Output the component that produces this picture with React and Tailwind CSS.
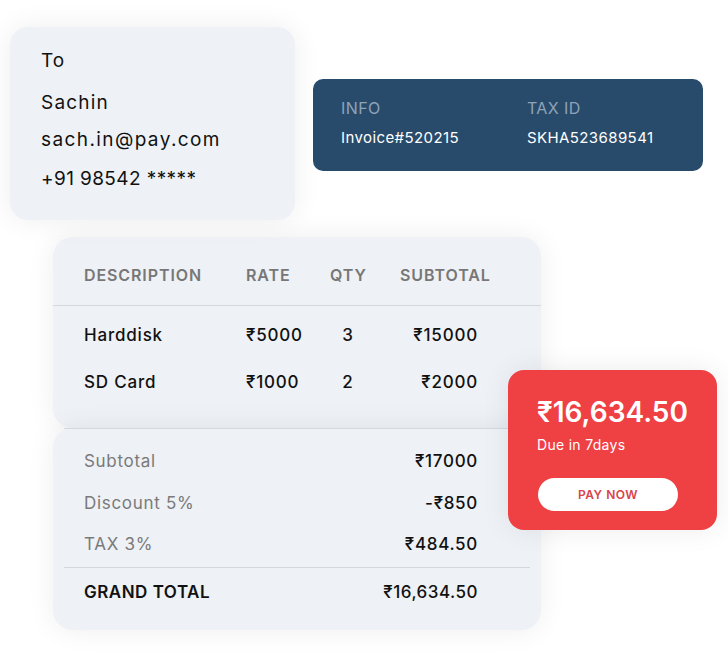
import React from "react";

const items = [
  { name: "Harddisk", rate: "₹5000", qty: 3, total: "₹15000" },
  { name: "SD Card", rate: "₹1000", qty: 2, total: "₹2000" },
];

const summary = [
  { label: "Subtotal", value: "₹17000" },
  { label: "Discount 5%", value: "-₹850" },
  { label: "TAX 3%", value: "₹484.50" },
];

const cardShadow = "shadow-[0_0_28px_rgba(15,23,42,0.07)]";

export default function App() {
  return (
    <div
      className="relative w-[728px] h-[659px] bg-white overflow-hidden text-[#111]"
      style={{ fontFamily: "Inter, 'Noto Sans', sans-serif" }}
    >
      {/* top row */}
      <div className="flex items-start pt-[27px] pl-[10px]">
        <div className={`w-[285px] h-[193px] rounded-[18px] bg-[#eef1f5] pl-[31px] pt-[21px] text-[19px] leading-[26px] tracking-[0.9px] ${cardShadow}`}>
          <div>To</div>
          <div className="mt-[16px] tracking-[1.2px]">Sachin</div>
          <div className="mt-[11px] tracking-[1.4px]">sach.in@pay.com</div>
          <div className="mt-[13px] tracking-[0.4px]">+91 98542 *****</div>
        </div>

        <div className="ml-[18px] mt-[52px] w-[390px] h-[92px] rounded-[10px] bg-[#284b6b] pl-[28px] pt-[17px] grid grid-cols-[186px_1fr] tracking-[0.4px]">
          <div>
            <div className="text-[16px] leading-[24px] text-[#8ea3b8]">INFO</div>
            <div className="text-[15px] leading-[20px] text-white mt-[8px]">Invoice#520215</div>
          </div>
          <div>
            <div className="text-[16px] leading-[24px] text-[#8ea3b8]">TAX ID</div>
            <div className="text-[15px] leading-[20px] text-white mt-[8px]">SKHA523689541</div>
          </div>
        </div>
      </div>

      {/* invoice table */}
      <div className="ml-[53px] mt-[17px] w-[488px]">
        <div className={`h-[191px] rounded-[20px] bg-[#eef1f5] ${cardShadow}`}>
          <div className="h-[69px] border-b border-[#d4d8dd] pl-[31px] pt-[7px] grid grid-cols-[162px_84px_70px_78px] items-center text-[16px] font-semibold text-[#777] tracking-[0.9px]">
            <div>DESCRIPTION</div>
            <div>RATE</div>
            <div className="w-[36px] text-center">QTY</div>
            <div className="whitespace-nowrap">SUBTOTAL</div>
          </div>
          <div className="pl-[31px] pt-[6px]">
            {items.map((it) => (
              <div key={it.name} className="h-[47px] grid grid-cols-[162px_84px_70px_78px] items-center text-[17px] font-medium tracking-[0.8px]">
                <div>{it.name}</div>
                <div>{it.rate}</div>
                <div className="w-[36px] text-center">{it.qty}</div>
                <div className="text-right">{it.total}</div>
              </div>
            ))}
          </div>
        </div>

        <div className={`h-[202px] rounded-[20px] bg-[#eef1f5] ${cardShadow}`}>
          <div className="mx-[11px] border-t border-[#d4d8dd]" />
          <div className="pl-[31px] w-[425px] pt-[12px]">
            {summary.map((s) => (
              <div key={s.label} className="h-[41.5px] flex items-center justify-between text-[17px] tracking-[0.7px]">
                <span className="text-[#7a7a7a]">{s.label}</span>
                <span className="font-medium">{s.value}</span>
              </div>
            ))}
          </div>
          <div className="mx-[11px] mt-[1px] border-t border-[#d4d8dd]" />
          <div className="pl-[31px] w-[425px] h-[50px] flex items-center justify-between text-[17px] tracking-[0.5px]">
            <span className="font-semibold">GRAND TOTAL</span>
            <span className="font-medium">₹16,634.50</span>
          </div>
        </div>
      </div>

      {/* due card */}
      <div className="absolute left-[508px] top-[370px] w-[209px] h-[160px] rounded-[16px] bg-[#ef4044] pl-[29px] pt-[24px] text-white shadow-[0_0_28px_rgba(15,23,42,0.08)]">
        <div className="text-[28px] leading-[36px] font-semibold">₹16,634.50</div>
        <div className="text-[14px] leading-[20px] mt-[5px] tracking-[0.3px]">Due in 7days</div>
        <button className="mt-[23px] ml-[1px] w-[140px] h-[33px] rounded-full bg-white text-[12px] font-semibold tracking-[0.5px] text-[#d9434a]">
          PAY NOW
        </button>
      </div>
    </div>
  );
}
